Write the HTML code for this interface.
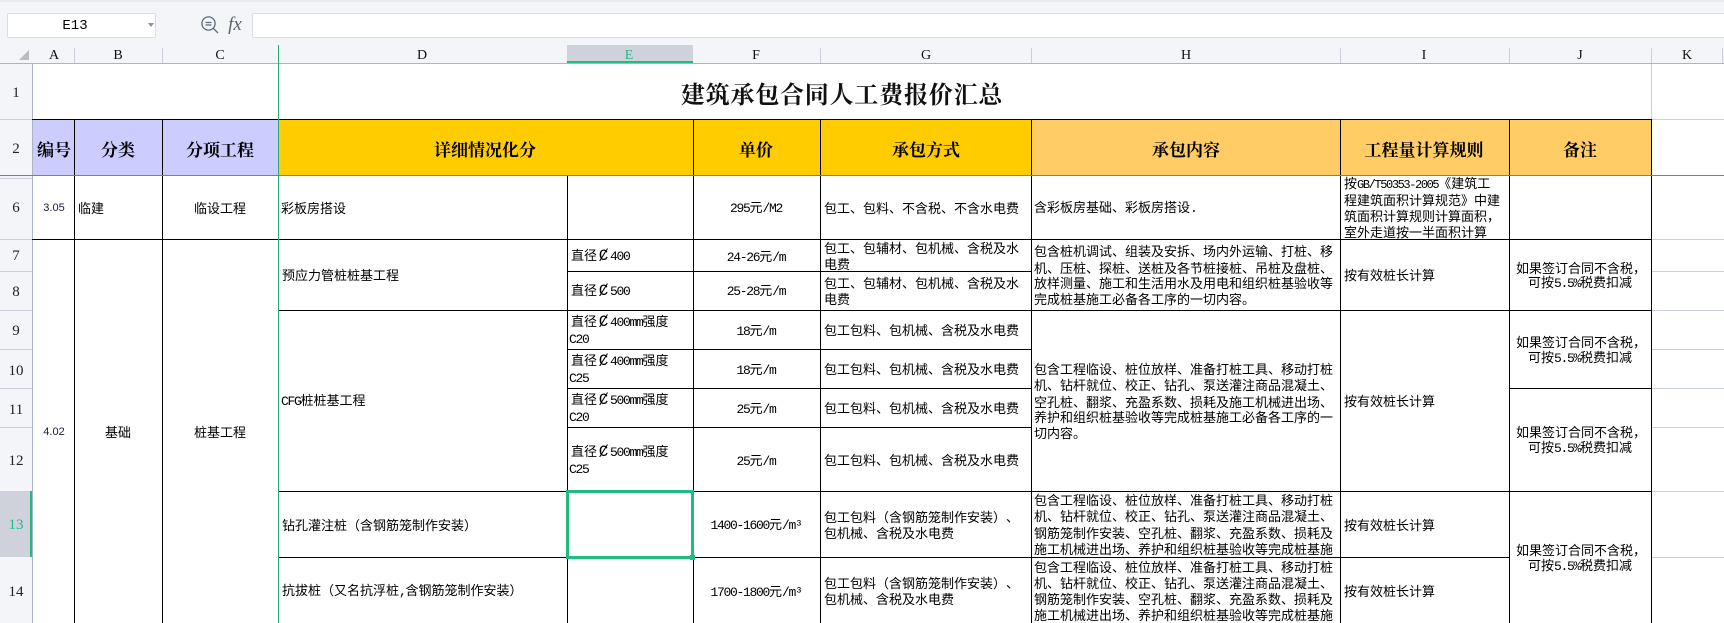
<!DOCTYPE html>
<html lang="zh"><head><meta charset="utf-8"><title>建筑承包合同人工费报价汇总</title>
<style>
html,body{margin:0;padding:0;background:#fff}
#p{position:relative;width:1724px;height:623px;overflow:hidden;background:#fff;font:13px/16px "WenQuanYi Zen Hei","Noto Sans CJK SC",sans-serif;color:#000;text-spacing-trim:space-all;font-feature-settings:"palt" 0}
#p div,#p svg{position:absolute}
.k{background:#000}
.g{background:#c9cfdc}
.t{white-space:nowrap;transform:translateY(-50%)}
.c{white-space:nowrap;transform:translate(-50%,-50%)}
i{font-style:normal;font-family:"Liberation Mono",monospace;font-size:13px;letter-spacing:-1.3px}
b{font-weight:normal;display:inline-block;width:13px;text-align:center;font-family:"Liberation Mono","DejaVu Sans",monospace;font-size:16px;line-height:14px}
.hd{font:bold 17px/20px "Noto Serif CJK SC","Liberation Serif",serif}
.n{font:15px/18px "Liberation Serif",serif;color:#222}
.l{font:14px/16px "Liberation Serif",serif;color:#111}
.s{font:11px/14px "Liberation Sans",sans-serif;color:#1a1a40}
</style></head><body><div id="p">

<!-- chrome -->
<div style="left:0;top:0;width:1724px;height:63px;background:#f4f5f8"></div>
<div style="left:0;top:0;width:1724px;height:2px;background:#e9e9eb"></div>
<div style="left:0;top:63px;width:32px;height:560px;background:#f4f5f8"></div>
<div style="left:7px;top:13px;width:147px;height:23px;background:#fff;border:1px solid #dcdde1;border-radius:2px"></div>
<div style="left:252px;top:13px;width:1480px;height:23px;background:#fff;border:1px solid #dcdde1;border-radius:2px"></div>
<div class="c" style="left:75px;top:26px;font:14px/16px 'Liberation Mono',monospace">E13</div>
<svg style="left:148px;top:23px" width="6" height="4"><path d="M0 0h6l-3 4z" fill="#8a8f98"/></svg>
<svg style="left:200px;top:15px" width="20" height="20" fill="none" stroke="#5a6a80" stroke-width="1.3"><circle cx="8.5" cy="8.5" r="6.6"/><path d="M5.5 7.5h6M5.5 10h6M13.5 13.5l4.5 4.5"/></svg>
<div class="c" style="left:235px;top:25px;font:italic 19px/20px 'Liberation Serif',serif;color:#5a6270">fx</div>

<!-- selected headers -->
<div style="left:567px;top:45px;width:126px;height:18px;background:#cfd2da"></div>
<div style="left:567px;top:61px;width:126px;height:2px;background:#20bb80"></div>
<div style="left:0;top:491px;width:30px;height:66px;background:#cfd2da"></div>
<div style="left:30px;top:491px;width:2px;height:66px;background:#20bb80"></div>

<!-- corner -->
<svg style="left:19px;top:50px" width="10" height="10"><path d="M0 10L10 0v10z" fill="#b9bcc0"/></svg>

<!-- fills row 2 -->
<div style="left:32px;top:119px;width:246px;height:56px;background:#ccf"></div>
<div style="left:278px;top:119px;width:753px;height:56px;background:#fc0"></div>
<div style="left:1031px;top:119px;width:620px;height:56px;background:#fc6"></div>

<!-- header separators -->
<div class="g" style="left:74px;top:48px;width:1px;height:15px"></div>
<div class="g" style="left:162px;top:48px;width:1px;height:15px"></div>
<div class="g" style="left:820px;top:48px;width:1px;height:15px"></div>
<div class="g" style="left:1031px;top:48px;width:1px;height:15px"></div>
<div class="g" style="left:1340px;top:48px;width:1px;height:15px"></div>
<div class="g" style="left:1509px;top:48px;width:1px;height:15px"></div>
<div class="g" style="left:1651px;top:48px;width:1px;height:15px"></div>
<div class="g" style="left:1722px;top:48px;width:1px;height:15px"></div>
<div style="left:0;top:63px;width:1724px;height:1px;background:#aab3c8"></div>
<div style="left:32px;top:64px;width:1px;height:559px;background:#aab3c8"></div>

<!-- row header lines -->
<div class="g" style="left:0;top:119px;width:32px;height:1px"></div>
<div class="g" style="left:0;top:178px;width:32px;height:1px"></div>
<div class="g" style="left:0;top:239px;width:32px;height:1px"></div>
<div class="g" style="left:0;top:271px;width:32px;height:1px"></div>
<div class="g" style="left:0;top:310px;width:32px;height:1px"></div>
<div class="g" style="left:0;top:349px;width:32px;height:1px"></div>
<div class="g" style="left:0;top:388px;width:32px;height:1px"></div>
<div class="g" style="left:0;top:427px;width:32px;height:1px"></div>

<!-- K grid -->
<div class="g" style="left:1651px;top:119px;width:73px;height:1px"></div>
<div class="g" style="left:1651px;top:239px;width:73px;height:1px"></div>
<div class="g" style="left:1651px;top:271px;width:73px;height:1px"></div>
<div class="g" style="left:1651px;top:310px;width:73px;height:1px"></div>
<div class="g" style="left:1651px;top:349px;width:73px;height:1px"></div>
<div class="g" style="left:1651px;top:388px;width:73px;height:1px"></div>
<div class="g" style="left:1651px;top:427px;width:73px;height:1px"></div>
<div class="g" style="left:1651px;top:491px;width:73px;height:1px"></div>
<div class="g" style="left:1651px;top:557px;width:73px;height:1px"></div>
<div class="g" style="left:1651px;top:64px;width:1px;height:55px"></div>

<!-- black horizontals -->
<div class="k" style="left:32px;top:119px;width:1620px;height:1px"></div>
<div class="k" style="left:32px;top:239px;width:1620px;height:1px"></div>
<div class="k" style="left:567px;top:271px;width:464px;height:1px"></div>
<div class="k" style="left:278px;top:310px;width:1374px;height:1px"></div>
<div class="k" style="left:567px;top:349px;width:464px;height:1px"></div>
<div class="k" style="left:567px;top:388px;width:464px;height:1px"></div>
<div class="k" style="left:1509px;top:388px;width:143px;height:1px"></div>
<div class="k" style="left:567px;top:427px;width:464px;height:1px"></div>
<div class="k" style="left:278px;top:491px;width:1374px;height:1px"></div>
<div class="k" style="left:278px;top:557px;width:1231px;height:1px"></div>

<!-- black verticals -->
<div class="k" style="left:74px;top:119px;width:1px;height:504px"></div>
<div class="k" style="left:162px;top:119px;width:1px;height:504px"></div>
<div class="k" style="left:567px;top:175px;width:1px;height:448px"></div>
<div class="k" style="left:693px;top:119px;width:1px;height:504px"></div>
<div class="k" style="left:820px;top:119px;width:1px;height:504px"></div>
<div class="k" style="left:1031px;top:119px;width:1px;height:504px"></div>
<div class="k" style="left:1340px;top:119px;width:1px;height:504px"></div>
<div class="k" style="left:1509px;top:119px;width:1px;height:504px"></div>
<div class="k" style="left:1651px;top:119px;width:1px;height:504px"></div>

<!-- freeze panes -->
<div style="left:278px;top:45px;width:1px;height:578px;background:#2fa878"></div>
<div style="left:0;top:175px;width:1724px;height:1px;background:#2fa878"></div>

<!-- selection -->
<div style="left:566px;top:490px;width:122px;height:63px;border:3px solid #20bb80;box-sizing:content-box"></div>
<div style="left:690px;top:555px;width:5px;height:5px;background:#20bb80"></div>

<!-- column letters -->
<div class="c l" style="left:54px;top:56px">A</div>
<div class="c l" style="left:118px;top:56px">B</div>
<div class="c l" style="left:220px;top:56px">C</div>
<div class="c l" style="left:422px;top:56px">D</div>
<div class="c l" style="left:629px;top:56px;color:#20bb80">E</div>
<div class="c l" style="left:756px;top:56px">F</div>
<div class="c l" style="left:926px;top:56px">G</div>
<div class="c l" style="left:1186px;top:56px">H</div>
<div class="c l" style="left:1424px;top:56px">I</div>
<div class="c l" style="left:1580px;top:56px">J</div>
<div class="c l" style="left:1687px;top:56px">K</div>

<!-- row numbers -->
<div class="c n" style="left:16px;top:93px">1</div>
<div class="c n" style="left:16px;top:149px">2</div>
<div class="c n" style="left:16px;top:208px">6</div>
<div class="c n" style="left:16px;top:256px">7</div>
<div class="c n" style="left:16px;top:292px">8</div>
<div class="c n" style="left:16px;top:331px">9</div>
<div class="c n" style="left:16px;top:371px">10</div>
<div class="c n" style="left:16px;top:410px">11</div>
<div class="c n" style="left:16px;top:461px">12</div>
<div class="c n" style="left:16px;top:525px;color:#20bb80">13</div>
<div class="c n" style="left:16px;top:592px">14</div>

<!-- title & headers -->
<div class="c" style="left:842px;top:93px;font:bold 24px/28px 'Noto Serif CJK SC',serif;letter-spacing:.8px;color:#111">建筑承包合同人工费报价汇总</div>
<div class="c hd" style="left:54px;top:149px">编号</div>
<div class="c hd" style="left:118px;top:149px">分类</div>
<div class="c hd" style="left:220px;top:149px">分项工程</div>
<div class="c hd" style="left:485px;top:149px">详细情况化分</div>
<div class="c hd" style="left:756px;top:149px">单价</div>
<div class="c hd" style="left:926px;top:149px">承包方式</div>
<div class="c hd" style="left:1186px;top:149px">承包内容</div>
<div class="c hd" style="left:1424px;top:149px">工程量计算规则</div>
<div class="c hd" style="left:1580px;top:149px">备注</div>

<!-- row 6 -->
<div class="c s" style="left:54px;top:208px">3.05</div>
<div class="t" style="left:78px;top:208px">临建</div>
<div class="c" style="left:220px;top:208px">临设工程</div>
<div class="t" style="left:281px;top:208px">彩板房搭设</div>
<div class="c" style="left:756px;top:208px"><i>295</i>元<i>/M2</i></div>
<div class="t" style="left:824px;top:208px">包工、包料、不含税、不含水电费</div>
<div class="t" style="left:1034px;top:208px">含彩板房基础、彩板房搭设<i>.</i></div>
<div class="t" style="left:1344px;top:184px">按<i style="font-size:12px;letter-spacing:-1.4px">GB/T50353-2005</i>《建筑工</div>
<div class="t" style="left:1344px;top:200px">程建筑面积计算规范》中建</div>
<div class="t" style="left:1344px;top:216px">筑面积计算规则计算面积，</div>
<div class="t" style="left:1344px;top:232px">室外走道按一半面积计算</div>

<!-- merged left -->
<div class="c s" style="left:54px;top:432px">4.02</div>
<div class="c" style="left:118px;top:432px">基础</div>
<div class="c" style="left:220px;top:432px">桩基工程</div>

<!-- D -->
<div class="t" style="left:282px;top:275px">预应力管桩桩基工程</div>
<div class="t" style="left:281px;top:401px"><i>CFG</i>桩桩基工程</div>
<div class="t" style="left:282px;top:525px">钻孔灌注桩（含钢筋笼制作安装）</div>
<div class="t" style="left:282px;top:591px">抗拔桩（又名抗浮桩<i>,</i>含钢筋笼制作安装）</div>

<!-- E -->
<div class="t" style="left:571px;top:256px">直径<b>Ȼ</b><i>400</i></div>
<div class="t" style="left:571px;top:291px">直径<b>Ȼ</b><i>500</i></div>
<div class="t" style="left:571px;top:322px">直径<b>Ȼ</b><i>400mm</i>强度</div>
<div class="t" style="left:569px;top:339px"><i>C20</i></div>
<div class="t" style="left:571px;top:361px">直径<b>Ȼ</b><i>400mm</i>强度</div>
<div class="t" style="left:569px;top:378px"><i>C25</i></div>
<div class="t" style="left:571px;top:400px">直径<b>Ȼ</b><i>500mm</i>强度</div>
<div class="t" style="left:569px;top:417px"><i>C20</i></div>
<div class="t" style="left:571px;top:452px">直径<b>Ȼ</b><i>500mm</i>强度</div>
<div class="t" style="left:569px;top:469px"><i>C25</i></div>

<!-- F -->
<div class="c" style="left:756px;top:257px"><i>24-26</i>元<i>/m</i></div>
<div class="c" style="left:756px;top:291px"><i>25-28</i>元<i>/m</i></div>
<div class="c" style="left:756px;top:331px"><i>18</i>元<i>/m</i></div>
<div class="c" style="left:756px;top:370px"><i>18</i>元<i>/m</i></div>
<div class="c" style="left:756px;top:409px"><i>25</i>元<i>/m</i></div>
<div class="c" style="left:756px;top:461px"><i>25</i>元<i>/m</i></div>
<div class="c" style="left:756px;top:525px"><i>1400-1600</i>元<i>/m³</i></div>
<div class="c" style="left:756px;top:592px"><i>1700-1800</i>元<i>/m³</i></div>

<!-- G -->
<div class="t" style="left:824px;top:248px">包工、包辅材、包机械、含税及水</div>
<div class="t" style="left:824px;top:264px">电费</div>
<div class="t" style="left:824px;top:283px">包工、包辅材、包机械、含税及水</div>
<div class="t" style="left:824px;top:299px">电费</div>
<div class="t" style="left:824px;top:330px">包工包料、包机械、含税及水电费</div>
<div class="t" style="left:824px;top:369px">包工包料、包机械、含税及水电费</div>
<div class="t" style="left:824px;top:408px">包工包料、包机械、含税及水电费</div>
<div class="t" style="left:824px;top:460px">包工包料、包机械、含税及水电费</div>
<div class="t" style="left:824px;top:517px">包工包料（含钢筋笼制作安装）、</div>
<div class="t" style="left:824px;top:533px">包机械、含税及水电费</div>
<div class="t" style="left:824px;top:583px">包工包料（含钢筋笼制作安装）、</div>
<div class="t" style="left:824px;top:599px">包机械、含税及水电费</div>

<!-- H -->
<div class="t" style="left:1034px;top:251px">包含桩机调试、组装及安拆、场内外运输、打桩、移</div>
<div class="t" style="left:1034px;top:268px">机、压桩、探桩、送桩及各节桩接桩、吊桩及盘桩、</div>
<div class="t" style="left:1034px;top:283px">放样测量、施工和生活用水及用电和组织桩基验收等</div>
<div class="t" style="left:1034px;top:299px">完成桩基施工必备各工序的一切内容。</div>
<div class="t" style="left:1034px;top:369px">包含工程临设、桩位放样、准备打桩工具、移动打桩</div>
<div class="t" style="left:1034px;top:385px">机、钻杆就位、校正、钻孔、泵送灌注商品混凝土、</div>
<div class="t" style="left:1034px;top:402px">空孔桩、翻浆、充盈系数、损耗及施工机械进出场、</div>
<div class="t" style="left:1034px;top:417px">养护和组织桩基验收等完成桩基施工必备各工序的一</div>
<div class="t" style="left:1034px;top:433px">切内容。</div>
<div class="t" style="left:1034px;top:500px">包含工程临设、桩位放样、准备打桩工具、移动打桩</div>
<div class="t" style="left:1034px;top:516px">机、钻杆就位、校正、钻孔、泵送灌注商品混凝土、</div>
<div class="t" style="left:1034px;top:533px">钢筋笼制作安装、空孔桩、翻浆、充盈系数、损耗及</div>
<div class="t" style="left:1034px;top:549px">施工机械进出场、养护和组织桩基验收等完成桩基施</div>
<div class="t" style="left:1034px;top:567px">包含工程临设、桩位放样、准备打桩工具、移动打桩</div>
<div class="t" style="left:1034px;top:583px">机、钻杆就位、校正、钻孔、泵送灌注商品混凝土、</div>
<div class="t" style="left:1034px;top:599px">钢筋笼制作安装、空孔桩、翻浆、充盈系数、损耗及</div>
<div class="t" style="left:1034px;top:615px">施工机械进出场、养护和组织桩基验收等完成桩基施</div>

<!-- I -->
<div class="t" style="left:1344px;top:275px">按有效桩长计算</div>
<div class="t" style="left:1344px;top:401px">按有效桩长计算</div>
<div class="t" style="left:1344px;top:525px">按有效桩长计算</div>
<div class="t" style="left:1344px;top:591px">按有效桩长计算</div>

<!-- J -->
<div class="t" style="left:1516px;top:268px">如果签订合同不含税，</div>
<div class="t" style="left:1528px;top:283px">可按<i>5.5%</i>税费扣减</div>
<div class="t" style="left:1516px;top:342px">如果签订合同不含税，</div>
<div class="t" style="left:1528px;top:358px">可按<i>5.5%</i>税费扣减</div>
<div class="t" style="left:1516px;top:432px">如果签订合同不含税，</div>
<div class="t" style="left:1528px;top:448px">可按<i>5.5%</i>税费扣减</div>
<div class="t" style="left:1516px;top:550px">如果签订合同不含税，</div>
<div class="t" style="left:1528px;top:566px">可按<i>5.5%</i>税费扣减</div>

</div></body></html>
